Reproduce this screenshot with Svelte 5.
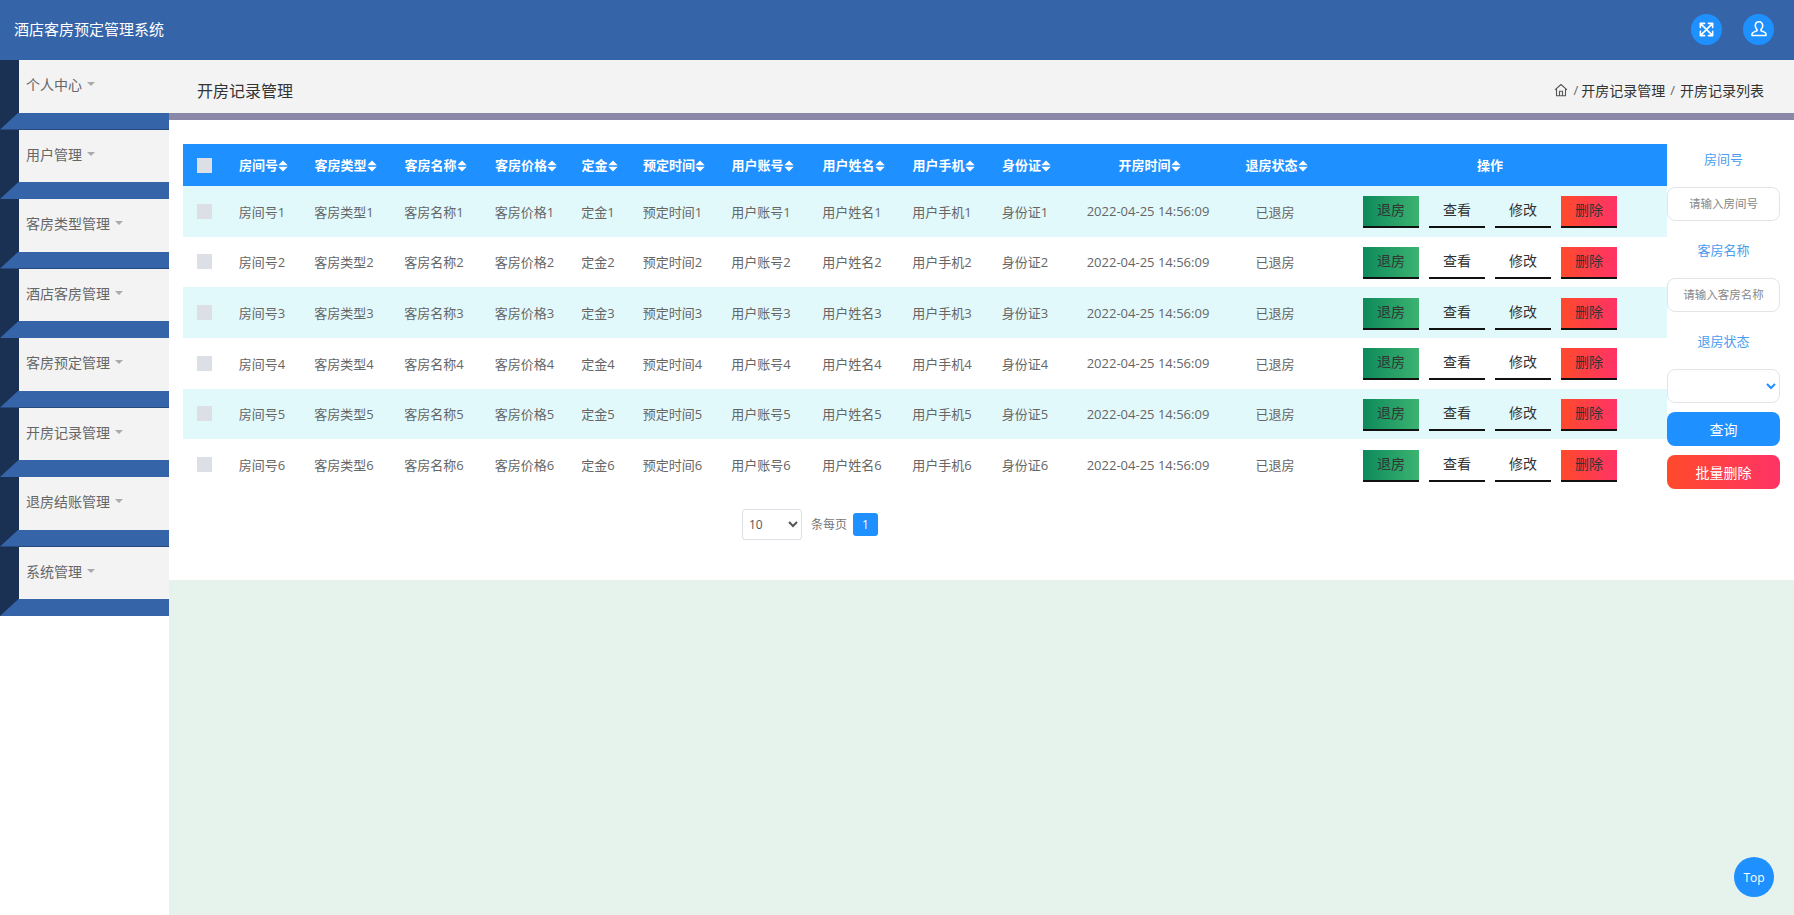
<script>
  const menus = ['个人中心','用户管理','客房类型管理','酒店客房管理','客房预定管理','开房记录管理','退房结账管理','系统管理'];
  const cols = [
    { t: '房间号', w: 92 }, { t: '客房类型', w: 72 }, { t: '客房名称', w: 108 }, { t: '客房价格', w: 73 },
    { t: '定金', w: 74 }, { t: '预定时间', w: 75 }, { t: '用户账号', w: 102 }, { t: '用户姓名', w: 80 },
    { t: '用户手机', w: 100 }, { t: '身份证', w: 66 }
  ];
  const rows = [1,2,3,4,5,6];
</script>

<div class="page">
  <header class="topbar">
    <div class="brand">酒店客房预定管理系统</div>
    <div class="top-actions">
      <span class="round">
        <svg viewBox="0 0 18 18" width="17" height="17" fill="none" stroke="#fff" stroke-width="1.7" stroke-linecap="round" stroke-linejoin="round">
          <path d="M2.5 2.5l13 13M15.5 2.5l-13 13M2.5 7V2.5H7M11 2.5h4.500V7M15.500 11v4.500H11M7 15.500H2.500V11"/>
        </svg>
      </span>
      <span class="round">
        <svg viewBox="0 0 18 18" width="18" height="18" fill="none" stroke="#fff" stroke-width="1.6" stroke-linejoin="round">
          <path d="M9 1.800c-2.300 0-3.700 1.700-3.700 3.900 0 1.600.7 2.900 1.700 3.700v1.300c-2 .6-5 1.500-5 3.400v1.400h14v-1.400c0-1.900-3-2.800-5-3.400V9.400c1-.8 1.700-2.100 1.700-3.700 0-2.200-1.400-3.900-3.700-3.900z"/>
        </svg>
      </span>
    </div>
  </header>

  <div class="body">
    <nav class="side">
      {#each menus as m}
        <div class="menu">
          <div class="menu-label">{m}<i class="caret"></i></div>
          <div class="band"></div>
        </div>
      {/each}
    </nav>

    <main class="main">
      <div class="crumbs">
        <div class="crumb-title">开房记录管理</div>
        <div class="crumb-path">
          <svg viewBox="0 0 14 14" width="14" height="14" fill="none" stroke="#555" stroke-width="1.100" stroke-linejoin="round">
            <path d="M1 6.800L7 1.500l6 5.300M2.500 5.800v7h9v-7M5.500 12.800V8.300h3v4.500"/>
          </svg>
          <span class="sep first">/</span><span>开房记录管理</span><span class="sep">/</span><span>开房记录列表</span>
        </div>
      </div>

      <section class="panel">
        <div class="left">
          <table>
            <colgroup>
              <col class="c-chk" />
              {#each cols as c}<col style="width:{c.w}px" />{/each}
              <col class="c-time" /><col class="c-state" /><col />
            </colgroup>
            <thead>
              <tr>
                <th class="chk"><span class="box"></span></th>
                {#each cols as c}
                  <th>{c.t}<svg class="sort" viewBox="0 0 9 11" width="10" height="12"><path d="M4.500 0.500L8.800 4.800H.2zM.2 6.200h8.600L4.500 10.500z" fill="#fff"/></svg></th>
                {/each}
                <th>开房时间<svg class="sort" viewBox="0 0 9 11" width="10" height="12"><path d="M4.500 0.500L8.800 4.800H.2zM.2 6.200h8.600L4.500 10.500z" fill="#fff"/></svg></th>
                <th>退房状态<svg class="sort" viewBox="0 0 9 11" width="10" height="12"><path d="M4.500 0.500L8.800 4.800H.2zM.2 6.200h8.600L4.500 10.500z" fill="#fff"/></svg></th>
                <th>操作</th>
              </tr>
            </thead>
            <tbody>
              {#each rows as n}
                <tr>
                  <td class="chk"><span class="box"></span></td>
                  {#each cols as c}<td>{c.t}{n}</td>{/each}
                  <td>2022-04-25 14:56:09</td>
                  <td>已退房</td>
                  <td class="op-cell">
                    <div class="ops">
                      <button class="op green">退房</button>
                      <button class="op plain">查看</button>
                      <button class="op plain">修改</button>
                      <button class="op red">删除</button>
                    </div>
                  </td>
                </tr>
              {/each}
            </tbody>
          </table>

          <div class="pager">
            <select class="size"><option>10</option></select>
            <span class="per">条每页</span>
            <span class="num">1</span>
          </div>
        </div>

        <aside class="filter">
          <div class="f-label">房间号</div>
          <input class="f-input" placeholder="请输入房间号" />
          <div class="f-label">客房名称</div>
          <input class="f-input" placeholder="请输入客房名称" />
          <div class="f-label">退房状态</div>
          <select class="f-input f-select"><option></option></select>
          <button class="f-btn query">查询</button>
          <button class="f-btn batch">批量删除</button>
        </aside>
      </section>
    </main>
  </div>

  <div class="to-top">Top</div>
</div>

<style>
  :global(body) { margin: 0; background: #fff; }
  * { box-sizing: border-box; }
  .page {
    width: 1794px; height: 915px; overflow: hidden;
    font-family: "Open Sans", "Noto Sans CJK SC", sans-serif;
    font-size: 13px; color: #666;
    display: flex; flex-direction: column;
  }
  .topbar {
    height: 60px; flex: none; background: #3565a8;
    display: flex; align-items: center; justify-content: space-between;
    padding: 0 20px 2px 14px;
  }
  .brand { color: #fff; font-size: 15px; padding-bottom: 2px; }
  .top-actions { display: flex; gap: 21px; }
  .round {
    width: 31px; height: 31px; border-radius: 50%; background: #1e90ff;
    display: flex; align-items: center; justify-content: center;
  }
  .body { flex: 1; display: flex; min-height: 0; }
  .side { width: 169px; flex: none; background: #fff; }
  .menu { height: 69.5px; background: #1a3154; display: flex; flex-direction: column; }
  .menu-label {
    height: 52.5px; margin-left: 18.500px; padding: 0 0 4px 7.500px; background: #f3f3f3;
    display: flex; align-items: center; font-size: 14px; color: #666;
  }
  .caret {
    display: inline-block; margin-left: 5px; margin-top: 0;
    border-left: 4px solid transparent; border-right: 4px solid transparent;
    border-top: 4px solid #aaa;
  }
  .band {
    height: 17px; background: #3565a8;
    clip-path: polygon(18.500px 0, 100% 0, 100% 100%, 0 100%);
  }
  .main { flex: 1; background: #e6f3ed; min-width: 0; }
  .crumbs {
    height: 60px; background: #f3f3f3; border-bottom: 7px solid #8b87a8;
    display: flex; justify-content: space-between; align-items: center;
    padding: 7px 30px 0 28px;
  }
  .crumb-title { font-size: 16px; color: #333; }
  .crumb-path { display: flex; align-items: center; font-size: 14px; color: #333; }
  .sep { margin: 0 5px; color: #666; font-size: 13px; }
  .sep.first { margin: 0 3px 0 5px; }
  .panel {
    height: 460px; background: #fff; padding: 24px 14px 0 14px;
    display: flex; align-items: flex-start;
  }
  .left { width: 1484px; flex: none; }
  table { width: 1484px; border-collapse: collapse; table-layout: fixed; }
  .c-chk { width: 34px; }
  .c-time { width: 180px; }
  .c-state { width: 74px; }
  th {
    height: 42px; background: #1e90ff; color: #fff; font-size: 13px; font-weight: 700;
    text-align: center; padding: 0 0 2px; white-space: nowrap;
  }
  th.chk { padding: 0 0 0 14px; }
  td { height: 50.670px; text-align: center; padding: 0 2px 0 0; white-space: nowrap; color: #666; }
  td.op-cell { padding: 0; }
  tbody tr:nth-child(odd) td { background: #e2f9fb; }
  .chk { text-align: left; padding-left: 14px; }
  .box { display: block; width: 15px; height: 15px; background: #dcdfe6; }
  .sort { vertical-align: -2px; margin-right: -1px; }
  .ops { display: flex; justify-content: center; gap: 9.500px; padding-top: 2px; }
  .op {
    width: 56.500px; height: 32px; padding: 0 0 4px; border: 0; border-bottom: 2px solid #111;
    font: inherit; font-size: 14px; color: #333;
  }
  .green { background: linear-gradient(90deg, #0d8a5b, #3cb371); }
  .plain { background: transparent; }
  .red { background: linear-gradient(90deg, #ff4a2b, #ff3366); }
  .pager { display: flex; align-items: center; margin: 19px 0 0 559px; }
  .size {
    width: 60px; height: 31px; padding-left: 2px; font: inherit; font-size: 12px; color: #555;
    background: #fff; border: 1px solid #dcdfe6; border-radius: 3px;
  }
  .per { margin-left: 9px; font-size: 12px; color: #777; }
  .num {
    margin-left: 6px; width: 25px; height: 23px; border-radius: 3px; background: #1e90ff; color: #fff;
    font-size: 12px; display: flex; align-items: center; justify-content: center;
  }
  .filter { width: 113px; flex: none; padding-top: 1px; display: flex; flex-direction: column; }
  .f-label { height: 32px; line-height: 29px; text-align: center; color: #4a9df0; font-size: 13px; margin-bottom: 10px; }
  .f-input {
    width: 113px; height: 34px; border: 1px solid #e2e4e8; border-radius: 8px; background: #fff;
    text-align: center; font: inherit; font-size: 11.500px; margin-bottom: 15px; padding: 0 0 2px; color: #1e90ff; outline: none;
  }
  .f-input::placeholder { color: #888; opacity: 1; }
  .f-select { margin-bottom: 9px; }
  .f-btn {
    width: 113px; height: 34px; border: 0; border-radius: 8px; color: #fff; font: inherit; font-size: 14px; margin-bottom: 9px; padding: 0;
  }
  .query { background: #1e90ff; }
  .batch { background: linear-gradient(90deg, #ff4a2b, #ff3366); }
  .to-top {
    position: fixed; left: 1734px; top: 857px; width: 40px; height: 40px; border-radius: 50%;
    background: #1e90ff; color: #fff; font-size: 12px;
    display: flex; align-items: center; justify-content: center;
  }
</style>
